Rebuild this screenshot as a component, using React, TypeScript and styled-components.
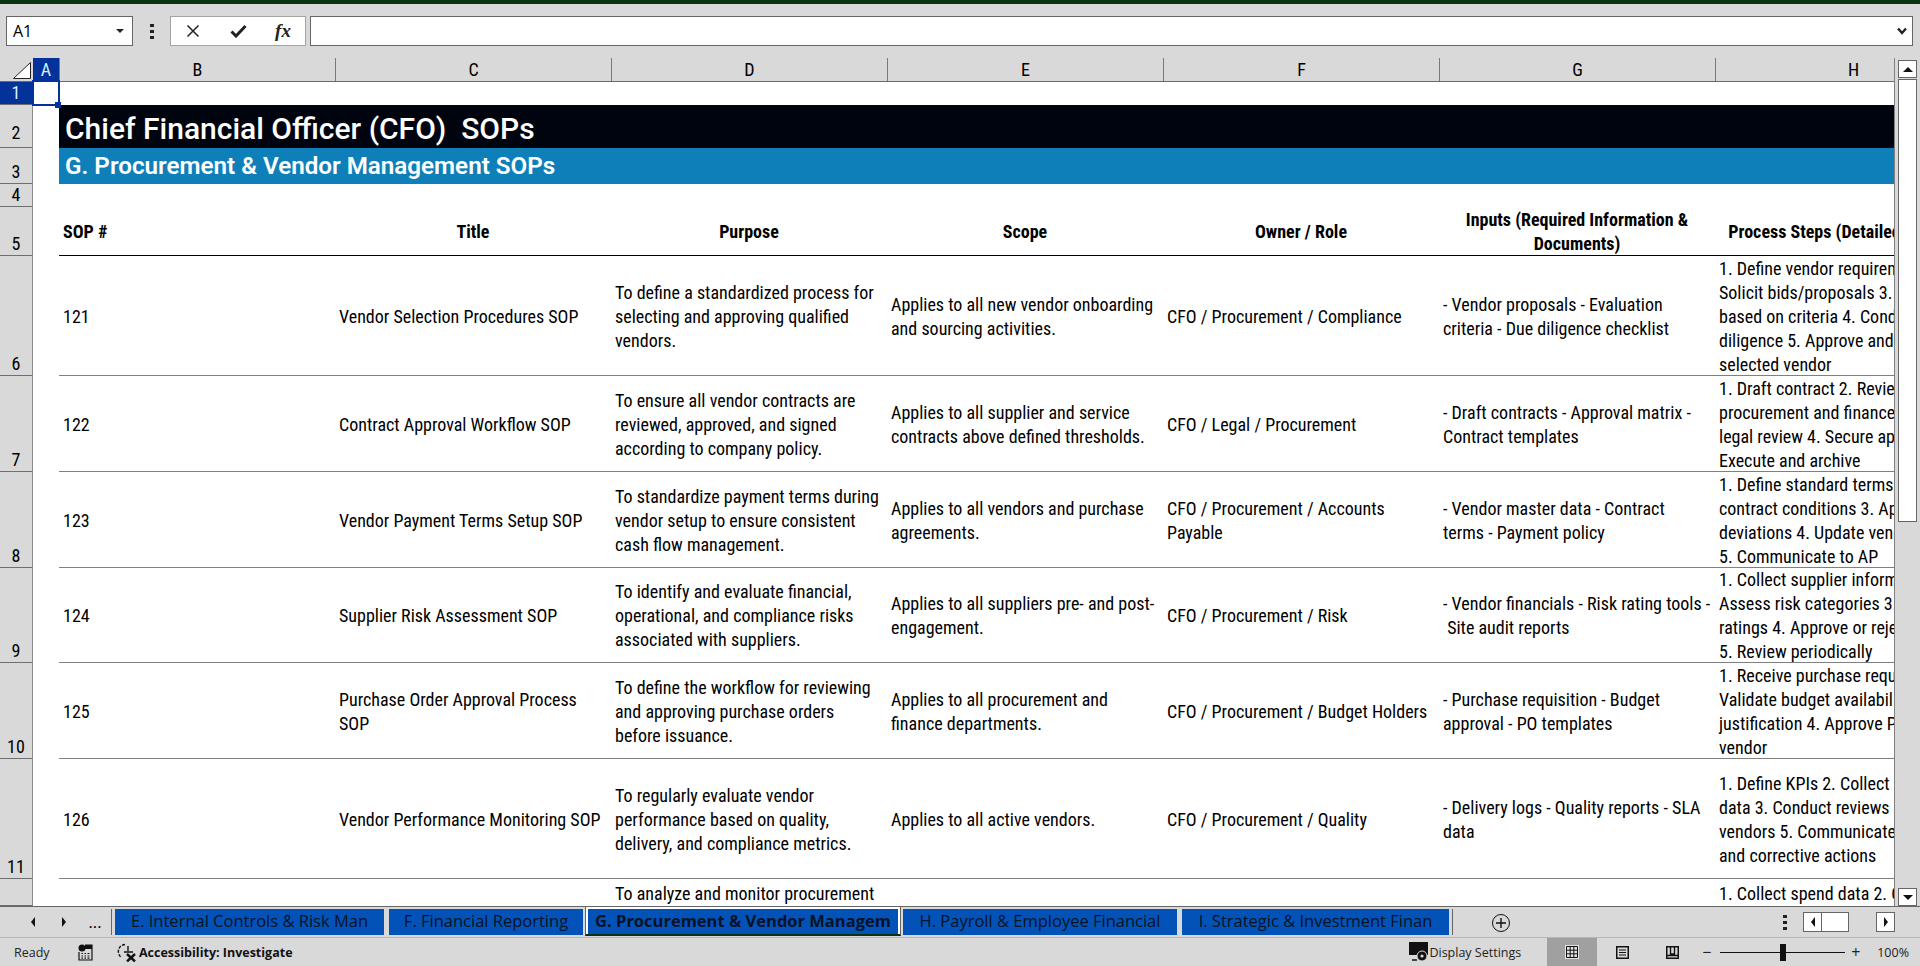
import React from 'react'
import styled, { createGlobalStyle } from 'styled-components'

const SHEET_FONT = 'Roboto, "Liberation Sans", sans-serif'
const UI_FONT = '"Open Sans", "Noto Sans", sans-serif'

const GlobalStyle = createGlobalStyle`
  html, body {
    margin: 0;
    padding: 0;
    height: 100%;
    overflow: hidden;
    background: #d9d9d9;
  }
  #root {
    height: 100%;
  }
`

const Page = styled.div`
  display: flex;
  flex-direction: column;
  height: 966px;
  width: 1920px;
  background: #d9d9d9;
  color: #000;
`

const TitleStrip = styled.div`
  height: 4px;
  flex: none;
  background: #0b3512;
`

const FormulaBar = styled.div`
  flex: none;
  height: 54px;
  box-sizing: border-box;
  padding: 12px 7px 0 6px;
  display: flex;
  align-items: flex-start;
`

const NameBox = styled.div`
  width: 127px;
  height: 30px;
  box-sizing: border-box;
  border: 1px solid #666;
  background: #fff;
  display: flex;
  align-items: center;
  justify-content: space-between;
  padding: 0 8px 0 6px;
  font: 16px ${UI_FONT};
`

const Caret = styled.span`
  width: 0;
  height: 0;
  border-left: 4px solid transparent;
  border-right: 4px solid transparent;
  border-top: 4px solid #222;
`

const DotStack = styled.div`
  width: 37px;
  height: 30px;
  flex: none;
  display: flex;
  flex-direction: column;
  align-items: center;
  justify-content: center;
  gap: 3px;
`

const Dot = styled.span`
  width: 4px;
  height: 3px;
  background: #222;
`

const FormulaButtons = styled.div`
  width: 136px;
  height: 30px;
  flex: none;
  box-sizing: border-box;
  border: 1px solid #a3a3a3;
  background: #fff;
  display: grid;
  grid-template-columns: 44px 46px 44px;
  align-items: center;
  justify-items: center;
`

const FxLabel = styled.span`
  font: italic bold 19px "Liberation Serif", serif;
  color: #222;
`

const FormulaInput = styled.div`
  flex: 1;
  height: 30px;
  margin-left: 4px;
  box-sizing: border-box;
  border: 1px solid #666;
  background: #fff;
  display: flex;
  align-items: center;
  justify-content: flex-end;
  padding-right: 5px;
`

const SheetArea = styled.div`
  flex: none;
  height: 848px;
  display: flex;
`

const Grid = styled.div`
  width: 1895px;
  flex: none;
  overflow: hidden;
  box-sizing: border-box;
  border-right: 1px solid #808080;
  font: 18px/24px ${SHEET_FONT};
  font-stretch: 85%;
`

const ColumnHeaders = styled.div`
  display: flex;
  height: 24px;
  box-sizing: border-box;
  border-bottom: 1px solid #6b6b6b;
  line-height: 23px;
`

const Corner = styled.div`
  width: 33px;
  flex: none;
  display: flex;
  align-items: flex-end;
  justify-content: flex-end;
  padding: 0 2px 2px 0;
  box-sizing: border-box;
`

const ColumnHead = styled.div<{ $width: number; $active?: boolean }>`
  width: ${({ $width }) => $width}px;
  flex: none;
  box-sizing: border-box;
  text-align: center;
  border-right: 1px solid #7a7a7a;
  background: ${({ $active }) => ($active ? '#03329a' : 'transparent')};
  color: ${({ $active }) => ($active ? '#d8f0ff' : '#000')};
`

const Row = styled.div<{ $height: number }>`
  display: flex;
  height: ${({ $height }) => $height}px;
  background: #fff;
`

const RowHead = styled.div<{ $active?: boolean; $lift?: number }>`
  width: 33px;
  flex: none;
  box-sizing: border-box;
  display: flex;
  align-items: flex-end;
  justify-content: center;
  padding-bottom: ${({ $lift }) => $lift ?? 0}px;
  border-right: 1px solid #8a8a8a;
  border-bottom: 1px solid #6f6f6f;
  background: ${({ $active }) => ($active ? '#03329a' : '#d9d9d9')};
  color: ${({ $active }) => ($active ? '#d8f0ff' : '#000')};
  line-height: 22px;
`

const ColumnA = styled.div`
  width: 26px;
  flex: none;
  position: relative;
`

const Selection = styled.div`
  position: absolute;
  left: -1px;
  top: -2px;
  width: 28px;
  height: 26px;
  box-sizing: border-box;
  border: 2px solid #03329a;
  z-index: 2;
`

const SelectionHandle = styled.span`
  position: absolute;
  right: -3px;
  bottom: -4px;
  width: 6px;
  height: 6px;
  background: #03329a;
`

const Cells = styled.div<{ $rule?: string }>`
  flex: 1;
  min-width: 0;
  display: flex;
  box-sizing: border-box;
  border-bottom: ${({ $rule }) => ($rule ? `1px solid ${$rule}` : 'none')};
`

const Banner = styled.div`
  flex: 1;
  background: #00040f;
  color: #fff;
  display: flex;
  align-items: center;
  padding: 4px 0 0 6px;
  box-sizing: border-box;
  font-size: 30px;
  font-stretch: 100%;
  font-weight: 500;
  line-height: 39px;
  white-space: pre;
`

const SubBanner = styled.div`
  flex: 1;
  background: #0f7fb9;
  color: #fff;
  display: flex;
  align-items: center;
  padding: 1px 0 0 6px;
  box-sizing: border-box;
  font-size: 24.2px;
  font-stretch: 100%;
  font-weight: 600;
  line-height: 33px;
`

const Cell = styled.div<{ $head?: boolean; $center?: boolean }>`
  width: 276px;
  flex: none;
  box-sizing: border-box;
  padding: 2px 4px 0;
  display: flex;
  flex-direction: column;
  justify-content: center;
  overflow: hidden;
  font-weight: ${({ $head }) => ($head ? 700 : 400)};
  text-align: ${({ $center }) => ($center ? 'center' : 'left')};
`

const Line = styled.span`
  display: block;
  white-space: pre;
`

const ScrollRail = styled.div`
  flex: 1;
  display: flex;
  flex-direction: column;
  padding: 2px 3px 0;
  box-sizing: border-box;
`

const ScrollButton = styled.div`
  width: 19px;
  height: 18px;
  flex: none;
  box-sizing: border-box;
  border: 1px solid #666;
  background: #fff;
  display: flex;
  align-items: center;
  justify-content: center;
`

const ScrollThumb = styled.div`
  width: 19px;
  height: 443px;
  flex: none;
  margin-top: 1px;
  box-sizing: border-box;
  border: 1px solid #666;
  background: #fff;
`

const ScrollGap = styled.div`
  flex: 1;
`

const Triangle = styled.span<{ $dir: 'up' | 'down' | 'left' | 'right' }>`
  width: 0;
  height: 0;
  ${({ $dir }) =>
    $dir === 'up' || $dir === 'down'
      ? `border-left: 5px solid transparent; border-right: 5px solid transparent; border-${$dir === 'up' ? 'bottom' : 'top'}: 5px solid #111;`
      : `border-top: 5px solid transparent; border-bottom: 5px solid transparent; border-${$dir === 'left' ? 'right' : 'left'}: 4px solid #111;`}
`

const TabBar = styled.div`
  flex: none;
  height: 32px;
  box-sizing: border-box;
  border-top: 1px solid #666;
  border-bottom: 1px solid #b5b5b5;
  display: flex;
  align-items: flex-start;
  font: 16.5px/24px ${UI_FONT};
`

const TabNav = styled.div`
  width: 112px;
  height: 26px;
  margin-top: 2px;
  flex: none;
  box-sizing: border-box;
  border-right: 1px solid #666;
  display: grid;
  grid-template-columns: 20px 42px 20px;
  padding-left: 23px;
  align-items: center;
  justify-items: center;
  margin-right: 3px;
`

const Tab = styled.div<{ $width: number; $active?: boolean }>`
  width: ${({ $width }) => $width}px;
  height: 26px;
  margin-top: 2px;
  margin-right: 5px;
  flex: none;
  box-sizing: border-box;
  background: #0352b8;
  color: #061325;
  text-align: center;
  white-space: nowrap;
  overflow: hidden;
  font-weight: ${({ $active }) => ($active ? 700 : 400)};
`

const ActiveTabFrame = styled.div`
  flex: none;
  margin-left: -3px;
  margin-right: 2px;
  margin-top: -1px;
  height: 30px;
  box-sizing: border-box;
  padding: 2px 2px 0;
  background: #fff;
  border-top: 1px solid #666;
  border-left: 1px solid #666;
  border-right: 1px solid #666;
  border-bottom: 2px solid #0b3512;
  & > div {
    margin: 0;
    height: 25px;
  }
`

const TabDivider = styled.span`
  width: 1px;
  height: 26px;
  margin-top: 2px;
  margin-left: -2px;
  flex: none;
  background: #666;
`

const AddSheet = styled.div`
  width: 18px;
  height: 18px;
  margin: 7px 0 0 39px;
  flex: none;
  box-sizing: border-box;
  border: 1px solid #111;
  border-radius: 50%;
  display: flex;
  align-items: center;
  justify-content: center;
`

const TabBarDots = styled(DotStack)`
  width: 10px;
  height: 26px;
  margin: 2px 0 0 270px;
`

const HScroll = styled.div`
  display: flex;
  margin: 5px 0 0 13px;
`

const HButton = styled(ScrollButton)`
  height: 20px;
`

const HThumb = styled.div`
  width: 27px;
  height: 20px;
  box-sizing: border-box;
  border: 1px solid #666;
  border-left: none;
  background: #fff;
`

const HGap = styled.div`
  width: 27px;
`

const StatusBar = styled.div`
  flex: none;
  height: 28px;
  display: flex;
  align-items: center;
  font: 12.5px ${UI_FONT};
  color: #222;
`

const Ready = styled.span`
  margin-left: 14px;
  width: 64px;
  flex: none;
`

const StatusIcon = styled.span<{ $left?: number }>`
  display: flex;
  flex: none;
  margin-left: ${({ $left }) => $left ?? 0}px;
`

const Accessibility = styled.span`
  margin-left: 2px;
  font-weight: 700;
  white-space: nowrap;
  color: #111;
`

const StatusSpacer = styled.div`
  flex: 1;
`

const DisplaySettings = styled.span`
  margin: 0 26px 0 0;
`

const ViewButton = styled.div<{ $active?: boolean; $width: number }>`
  width: ${({ $width }) => $width}px;
  height: 28px;
  flex: none;
  display: flex;
  align-items: center;
  justify-content: center;
  background: ${({ $active }) => ($active ? '#a0a0a0' : 'transparent')};
`

const ZoomMinus = styled.span`
  width: 13px;
  flex: none;
  margin-left: 3px;
  text-align: center;
  font-size: 16px;
  line-height: 16px;
`

const ZoomSlider = styled.div`
  width: 125px;
  height: 1px;
  flex: none;
  margin: 0 4px 0 7px;
  background: #111;
  position: relative;
`

const ZoomThumb = styled.span`
  position: absolute;
  left: 60px;
  top: -8px;
  width: 6px;
  height: 17px;
  background: #111;
`

const ZoomPlus = styled.span`
  width: 13px;
  flex: none;
  text-align: center;
  font-size: 16px;
  line-height: 16px;
`

const ZoomValue = styled.span`
  margin: 0 11px 0 15px;
  flex: none;
`

const columnHeads = ['B', 'C', 'D', 'E', 'F', 'G', 'H']

const headerCells = [
  { lines: ['SOP #'], center: false },
  { lines: ['Title'], center: true },
  { lines: ['Purpose'], center: true },
  { lines: ['Scope'], center: true },
  { lines: ['Owner / Role'], center: true },
  { lines: ['Inputs (Required Information &', 'Documents)'], center: true },
  { lines: ['Process Steps (Detailed Workflow)'], center: true }
]

const sopRows: { row: number; height: number; cells: string[][] }[] = [
  {
    row: 6,
    height: 120,
    cells: [
      ['121'],
      ['Vendor Selection Procedures SOP'],
      ['To define a standardized process for', 'selecting and approving qualified', 'vendors.'],
      ['Applies to all new vendor onboarding', 'and sourcing activities.'],
      ['CFO / Procurement / Compliance'],
      ['- Vendor proposals - Evaluation', 'criteria - Due diligence checklist'],
      ['1. Define vendor requirements 2.', 'Solicit bids/proposals 3. Evaluate', 'based on criteria 4. Conduct due', 'diligence 5. Approve and onboard', 'selected vendor']
    ]
  },
  {
    row: 7,
    height: 96,
    cells: [
      ['122'],
      ['Contract Approval Workflow SOP'],
      ['To ensure all vendor contracts are', 'reviewed, approved, and signed', 'according to company policy.'],
      ['Applies to all supplier and service', 'contracts above defined thresholds.'],
      ['CFO / Legal / Procurement'],
      ['- Draft contracts - Approval matrix -', 'Contract templates'],
      ['1. Draft contract 2. Review with', 'procurement and finance 3. Conduct', 'legal review 4. Secure approvals 5.', 'Execute and archive']
    ]
  },
  {
    row: 8,
    height: 96,
    cells: [
      ['123'],
      ['Vendor Payment Terms Setup SOP'],
      ['To standardize payment terms during', 'vendor setup to ensure consistent', 'cash flow management.'],
      ['Applies to all vendors and purchase', 'agreements.'],
      ['CFO / Procurement / Accounts', 'Payable'],
      ['- Vendor master data - Contract', 'terms - Payment policy'],
      ['1. Define standard terms 2. Review', 'contract conditions 3. Approve', 'deviations 4. Update vendor master', '5. Communicate to AP']
    ]
  },
  {
    row: 9,
    height: 95,
    cells: [
      ['124'],
      ['Supplier Risk Assessment SOP'],
      ['To identify and evaluate financial,', 'operational, and compliance risks', 'associated with suppliers.'],
      ['Applies to all suppliers pre- and post-', 'engagement.'],
      ['CFO / Procurement / Risk'],
      ['- Vendor financials - Risk rating tools -', ' Site audit reports'],
      ['1. Collect supplier information 2.', 'Assess risk categories 3. Assign', 'ratings 4. Approve or reject supplier', '5. Review periodically']
    ]
  },
  {
    row: 10,
    height: 96,
    cells: [
      ['125'],
      ['Purchase Order Approval Process', 'SOP'],
      ['To define the workflow for reviewing', 'and approving purchase orders', 'before issuance.'],
      ['Applies to all procurement and', 'finance departments.'],
      ['CFO / Procurement / Budget Holders'],
      ['- Purchase requisition - Budget', 'approval - PO templates'],
      ['1. Receive purchase request 2.', 'Validate budget availability 3. Review', 'justification 4. Approve PO 5. Send to', 'vendor']
    ]
  },
  {
    row: 11,
    height: 120,
    cells: [
      ['126'],
      ['Vendor Performance Monitoring SOP'],
      ['To regularly evaluate vendor', 'performance based on quality,', 'delivery, and compliance metrics.'],
      ['Applies to all active vendors.'],
      ['CFO / Procurement / Quality'],
      ['- Delivery logs - Quality reports - SLA', 'data'],
      ['1. Define KPIs 2. Collect performance', 'data 3. Conduct reviews 4. Share with', 'vendors 5. Communicate results', 'and corrective actions']
    ]
  }
]

const CellLines = ({ lines }: { lines: string[] }) => (
  <>
    {lines.map((line) => (
      <Line key={line}>{line}</Line>
    ))}
  </>
)

const App: React.FC = () => {
  return (
    <Page>
      <GlobalStyle />
      <TitleStrip />
      <FormulaBar>
        <NameBox>
          A1
          <Caret />
        </NameBox>
        <DotStack>
          <Dot />
          <Dot />
          <Dot />
        </DotStack>
        <FormulaButtons>
          <svg width="14" height="14" viewBox="0 0 14 14">
            <path d="M1.5 1.5 12.5 12.5M12.5 1.5 1.5 12.5" stroke="#222" strokeWidth="1.5" fill="none" />
          </svg>
          <svg width="17" height="14" viewBox="0 0 17 14">
            <path d="M1.5 7.5 6 12 15.5 2" stroke="#222" strokeWidth="3" fill="none" />
          </svg>
          <FxLabel>fx</FxLabel>
        </FormulaButtons>
        <FormulaInput>
          <svg width="10" height="8" viewBox="0 0 10 8">
            <path d="M1 1.5 5 6 9 1.5" stroke="#222" strokeWidth="2.4" fill="none" />
          </svg>
        </FormulaInput>
      </FormulaBar>

      <SheetArea>
        <Grid>
          <ColumnHeaders>
            <Corner>
              <svg width="18" height="17" viewBox="0 0 18 17">
                <path d="M0.5 16.5 17.5 16.5 17.5 0.5Z" fill="#fff" stroke="#222" strokeWidth="1" />
              </svg>
            </Corner>
            <ColumnHead $width={27} $active>
              A
            </ColumnHead>
            {columnHeads.map((name) => (
              <ColumnHead key={name} $width={276}>
                {name}
              </ColumnHead>
            ))}
          </ColumnHeaders>

          <Row $height={23}>
            <RowHead $active>1</RowHead>
            <ColumnA>
              <Selection>
                <SelectionHandle />
              </Selection>
            </ColumnA>
            <Cells />
          </Row>
          <Row $height={43}>
            <RowHead $lift={3}>2</RowHead>
            <ColumnA />
            <Banner>Chief Financial Officer (CFO)  SOPs</Banner>
          </Row>
          <Row $height={36}>
            <RowHead>3</RowHead>
            <ColumnA />
            <SubBanner>G. Procurement &amp; Vendor Management SOPs</SubBanner>
          </Row>
          <Row $height={23}>
            <RowHead>4</RowHead>
            <ColumnA />
            <Cells />
          </Row>
          <Row $height={49}>
            <RowHead>5</RowHead>
            <ColumnA />
            <Cells $rule="#000">
              {headerCells.map((cell) => (
                <Cell key={cell.lines[0]} $head $center={cell.center}>
                  <CellLines lines={cell.lines} />
                </Cell>
              ))}
            </Cells>
          </Row>
          {sopRows.map((sop) => (
            <Row key={sop.row} $height={sop.height}>
              <RowHead>{sop.row}</RowHead>
              <ColumnA />
              <Cells $rule="#808080">
                {sop.cells.map((lines, i) => (
                  <Cell key={i}>
                    <CellLines lines={lines} />
                  </Cell>
                ))}
              </Cells>
            </Row>
          ))}
          <Row $height={27}>
            <RowHead />
            <ColumnA />
            <Cells>
              <Cell />
              <Cell />
              <Cell>
                <CellLines lines={['To analyze and monitor procurement']} />
              </Cell>
              <Cell />
              <Cell />
              <Cell />
              <Cell>
                <CellLines lines={['1. Collect spend data 2. Categorize']} />
              </Cell>
            </Cells>
          </Row>
        </Grid>
        <ScrollRail>
          <ScrollButton>
            <Triangle $dir="up" />
          </ScrollButton>
          <ScrollThumb />
          <ScrollGap />
          <ScrollButton>
            <Triangle $dir="down" />
          </ScrollButton>
        </ScrollRail>
      </SheetArea>

      <TabBar>
        <TabNav>
          <Triangle $dir="left" />
          <Triangle $dir="right" />
          <span>...</span>
        </TabNav>
        <Tab $width={269}>E. Internal Controls &amp; Risk Man</Tab>
        <Tab $width={194}>F. Financial Reporting</Tab>
        <ActiveTabFrame>
          <Tab $width={310} $active>
            G. Procurement &amp; Vendor Managem
          </Tab>
        </ActiveTabFrame>
        <Tab $width={274}>H. Payroll &amp; Employee Financial</Tab>
        <Tab $width={267}>I. Strategic &amp; Investment Finan</Tab>
        <TabDivider />
        <AddSheet>
          <svg width="10" height="10" viewBox="0 0 10 10">
            <path d="M5 0V10M0 5H10" stroke="#111" strokeWidth="1.4" />
          </svg>
        </AddSheet>
        <TabBarDots>
          <Dot />
          <Dot />
          <Dot />
        </TabBarDots>
        <HScroll>
          <HButton>
            <Triangle $dir="left" />
          </HButton>
          <HThumb />
          <HGap />
          <HButton>
            <Triangle $dir="right" />
          </HButton>
        </HScroll>
      </TabBar>

      <StatusBar>
        <Ready>Ready</Ready>
        <StatusIcon>
          <svg width="15" height="17" viewBox="0 0 15 17">
            <circle cx="4" cy="4" r="3.5" fill="#111" />
            <path d="M7 1H14V16H1V8" fill="none" stroke="#111" strokeWidth="1.2" />
            <path d="M7 1H14V5H7Z" fill="#111" />
            <path d="M3.5 9.5H5M6.5 9.5H8M9.5 9.5H11.5M3.5 12H5M6.5 12H8M9.5 12H11.5M3.5 14.2H5M6.5 14.2H8M9.5 14.2H11.5" stroke="#111" strokeWidth="1.2" />
          </svg>
        </StatusIcon>
        <StatusIcon $left={24}>
          <svg width="20" height="20" viewBox="0 0 20 20">
            <path d="M8 2.5A7 7 0 0 0 4 15" fill="none" stroke="#111" strokeWidth="1.4" strokeDasharray="3 1.4" />
            <path d="M7 10H16M11 4V9" stroke="#111" strokeWidth="1.4" fill="none" />
            <path d="M10 12 18 19.5M18 12 10 19.5" stroke="#111" strokeWidth="2.4" fill="none" />
          </svg>
        </StatusIcon>
        <Accessibility>Accessibility: Investigate</Accessibility>
        <StatusSpacer />
        <StatusIcon>
          <svg width="20" height="20" viewBox="0 0 20 20">
            <path d="M0 0H19V13H0Z" fill="#111" />
            <path d="M3 18H8" stroke="#111" strokeWidth="1.5" />
            <circle cx="13" cy="14" r="5" fill="#111" stroke="#d9d9d9" strokeWidth="1" />
            <circle cx="13" cy="14" r="1.6" fill="#d9d9d9" />
          </svg>
        </StatusIcon>
        <DisplaySettings>Display Settings</DisplaySettings>
        <ViewButton $width={50} $active>
          <svg width="14" height="14" viewBox="0 0 14 14">
            <rect width="14" height="14" fill="#e4e4e4" />
            <path d="M1.5 1.5H12.5V12.5H1.5ZM1.5 5.2H12.5M1.5 8.8H12.5M5.2 1.5V12.5M8.8 1.5V12.5" fill="none" stroke="#111" strokeWidth="1" />
          </svg>
        </ViewButton>
        <ViewButton $width={50}>
          <svg width="13" height="13" viewBox="0 0 13 13">
            <path d="M.75.75H12.25V12.25H.75Z" fill="none" stroke="#111" strokeWidth="1.5" />
            <path d="M3 4H10M3 6.5H10M3 9H10" stroke="#111" strokeWidth="1.2" />
          </svg>
        </ViewButton>
        <ViewButton $width={50}>
          <svg width="13" height="13" viewBox="0 0 13 13">
            <path d="M.75.75H12.25V12.25H.75Z" fill="none" stroke="#111" strokeWidth="1.5" />
            <path d="M4.5 1V8H8.5V1M.75 9.5H12.25" fill="none" stroke="#111" strokeWidth="1.4" />
          </svg>
        </ViewButton>
        <ZoomMinus>−</ZoomMinus>
        <ZoomSlider>
          <ZoomThumb />
        </ZoomSlider>
        <ZoomPlus>+</ZoomPlus>
        <ZoomValue>100%</ZoomValue>
      </StatusBar>
    </Page>
  )
}

export default App
